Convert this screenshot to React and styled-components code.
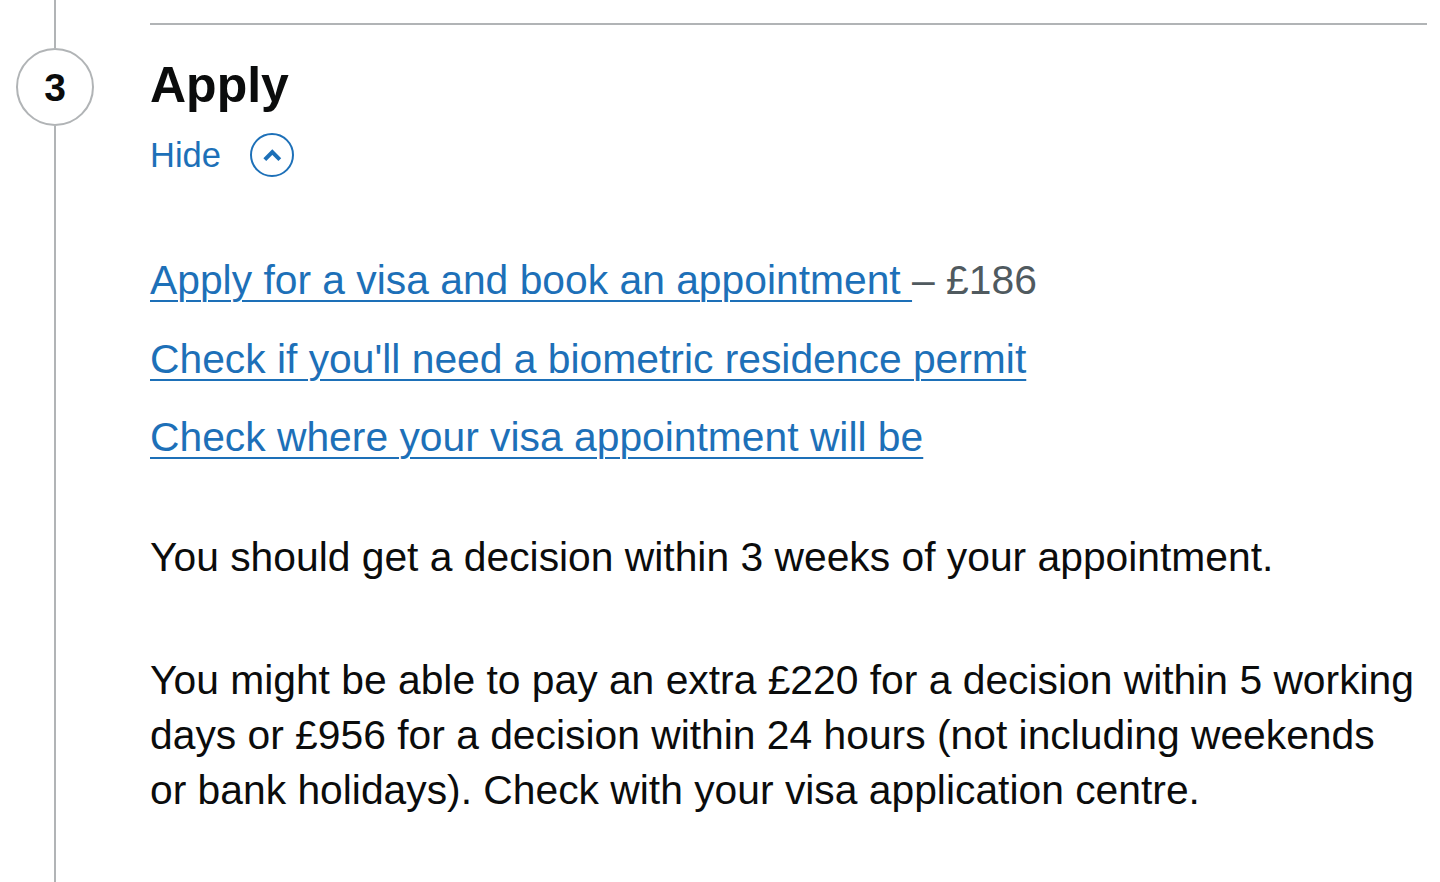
import React from "react";
import styled, { createGlobalStyle } from "styled-components";

const GlobalStyle = createGlobalStyle`
  html, body { margin: 0; padding: 0; background: #ffffff; }
  body {
    font-family: "Liberation Sans", Arial, sans-serif;
    color: #0b0c0c;
    -webkit-font-smoothing: antialiased;
  }
`;

const StepNav = styled.div`
  display: grid;
  grid-template-columns: 110px 1fr;
  column-gap: 40px;
  padding-right: 13px;
  min-height: 882px;
`;

const Rail = styled.div`
  display: flex;
  flex-direction: column;
  align-items: center;
`;

const RailLine = styled.div`
  width: 2px;
  background: #b1b4b6;
  flex: ${(p) => (p.$grow ? "1 1 auto" : `0 0 ${p.$h}px`)};
`;

const StepNumber = styled.div`
  flex: 0 0 auto;
  width: 78px;
  height: 78px;
  box-sizing: border-box;
  border: 2px solid #b1b4b6;
  border-radius: 50%;
  display: flex;
  align-items: center;
  justify-content: center;
  font-size: 39px;
  font-weight: 700;
  line-height: 1;
  color: #0b0c0c;
  background: #ffffff;
`;

const Content = styled.div`
  padding-top: 23px;
`;

const Step = styled.section`
  border-top: 2px solid #b1b4b6;
`;

const Title = styled.h2`
  margin: 30px 0 0;
  font-size: 50px;
  line-height: 60px;
  font-weight: 700;
  color: #0b0c0c;
`;

const Toggle = styled.button`
  margin-top: 18px;
  padding: 0;
  border: 0;
  background: none;
  display: flex;
  align-items: center;
  gap: 29px;
  height: 44px;
  font-family: inherit;
  font-size: 34.5px;
  line-height: 44px;
  color: #1d70b8;
  cursor: pointer;
`;

const ChevronCircle = styled.span`
  width: 44px;
  height: 44px;
  box-sizing: border-box;
  border: 2px solid #1d70b8;
  border-radius: 50%;
  display: block;
  position: relative;
  svg {
    position: absolute;
    left: -2px;
    top: -2px;
  }
`;

const LinkList = styled.ul`
  list-style: none;
  margin: 76px 0 0;
  padding: 0;
  display: flex;
  flex-direction: column;
  gap: 23.5px;
`;

const LinkItem = styled.li`
  font-size: 40.8px;
  line-height: 55px;
  white-space: nowrap;
`;

const Link = styled.a`
  color: #1d70b8;
  text-decoration: underline;
  text-decoration-thickness: 2px;
  text-underline-offset: 6px;
`;

const Context = styled.span`
  color: #505a5f;
`;

const Para = styled.p`
  margin: ${(p) => p.$mt}px 0 0;
  max-width: 1268px;
  font-size: 40.8px;
  line-height: 55px;
  color: #0b0c0c;
`;

function Chevron() {
  return (
    <svg width="44" height="44" viewBox="0 0 44 44" aria-hidden="true">
      <polyline
        points="14.8,26.6 22.3,19.1 29.8,26.6"
        fill="none"
        stroke="#1d70b8"
        strokeWidth="4"
        strokeLinejoin="miter"
        strokeLinecap="butt"
      />
    </svg>
  );
}

const links = [
  { text: "Apply for a visa and book an appointment ", context: "– £186" },
  { text: "Check if you'll need a biometric residence permit" },
  { text: "Check where your visa appointment will be" },
];

export default function App() {
  return (
    <>
      <GlobalStyle />
      <StepNav>
        <Rail>
          <RailLine $h={48} />
          <StepNumber>3</StepNumber>
          <RailLine $grow />
        </Rail>
        <Content>
          <Step>
            <Title>Apply</Title>
            <Toggle type="button">
              Hide
              <ChevronCircle>
                <Chevron />
              </ChevronCircle>
            </Toggle>
            <LinkList>
              {links.map((l) => (
                <LinkItem key={l.text}>
                  <Link href="#">{l.text}</Link>
                  {l.context && <Context>{l.context}</Context>}
                </LinkItem>
              ))}
            </LinkList>
            <Para $mt={65}>
              You should get a decision within 3 weeks of your appointment.
            </Para>
            <Para $mt={68}>
              You might be able to pay an extra £220 for a decision within 5 working
              days or £956 for a decision within 24 hours (not including weekends
              or bank holidays). Check with your visa application centre.
            </Para>
          </Step>
        </Content>
      </StepNav>
    </>
  );
}
